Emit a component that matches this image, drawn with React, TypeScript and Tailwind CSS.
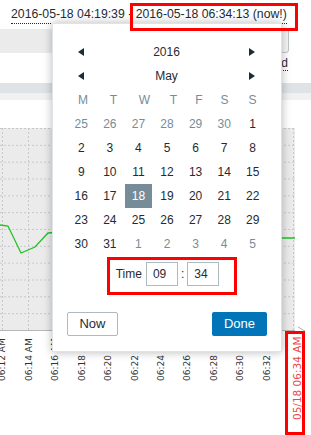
import React from "react";

type Day = { d: number; other?: boolean; sel?: boolean };

function buildDays(): Day[] {
  const out: Day[] = [];
  for (let d = 25; d <= 30; d++) out.push({ d, other: true });
  for (let d = 1; d <= 31; d++) out.push({ d, sel: d === 18 });
  for (let d = 1; d <= 5; d++) out.push({ d, other: true });
  return out;
}

function ArrowLeft() {
  return (
    <svg width="6" height="8" viewBox="0 0 6 8" className="block">
      <polygon points="6,0 6,8 0,4" fill="#1f2c33" />
    </svg>
  );
}
function ArrowRight() {
  return (
    <svg width="6" height="8" viewBox="0 0 6 8" className="block">
      <polygon points="0,0 0,8 6,4" fill="#1f2c33" />
    </svg>
  );
}

function Chart() {
  const H = 16.83;
  const labels = ["06:12", "06:14", "06:16", "06:18", "06:20", "06:22", "06:24", "06:26", "06:28", "06:30", "06:32"];
  return (
    <svg width="311" height="307" className="block">
      <rect x="-2" y="0" width="297" height="202" fill="#ebebeb" />
      {Array.from({ length: 12 }, (_, k) => (
        <line key={"h" + k} x1="0" x2="295" y1={k * H + 0.5} y2={k * H + 0.5} stroke="#c6c9cc" strokeDasharray="2 2" />
      ))}
      {Array.from({ length: 12 }, (_, j) => {
        const x = Math.round(2 + 26.45 * j) + 0.5;
        return <line key={"v" + j} x1={x} x2={x} y1="0" y2="202" stroke="#c6c9cc" strokeDasharray="2 2" />;
      })}
      <line x1="0" x2="295" y1="202.5" y2="202.5" stroke="#b4b8bb" />
      <polyline
        points="0,97 8,98 21,125 35,119 48,105 60,104 100,108 150,112 200,110 250,111 283,110 295,110"
        fill="none"
        stroke="#1fc41f"
        strokeWidth="1.3"
      />
      {labels.map((t, j) => {
        const bx = 2 + 26.45 * j + 3.3;
        return (
          <text
            key={t}
            transform={`translate(${bx},253) rotate(-90)`}
            fontSize="9"
            fontFamily="'DejaVu Sans', sans-serif"
            fill="#333"
          >
            {t} AM
          </text>
        );
      })}
      <polyline points="298,199 305,203" fill="none" stroke="#b0b0b0" />
      <text
        transform="translate(300.5,292) rotate(-90)"
        fontSize="10.5"
        fontFamily="'DejaVu Sans', sans-serif"
        fill="#e84848"
      >
        05/18 06:34 AM
      </text>
    </svg>
  );
}

export default function App() {
  const days = buildDays();
  const weekdays = ["M", "T", "W", "T", "F", "S", "S"];
  return (
    <div className="relative w-[311px] h-[435px] overflow-hidden bg-white font-['Liberation_Sans',Arial,sans-serif] text-[#1f2c33]">
      {/* header line */}
      <div className="h-[29px] pt-[7px] pl-[11px] whitespace-nowrap text-[12.25px] leading-[14px]">
        <span className="border-b border-dotted border-[#1f2c33] pb-[2px]">2016-05-18 04:19:39</span>
        <span> - </span>
        <span className="border-b border-dotted border-[#1f2c33] pb-[2px]">2016-05-18 06:34:13 (now!)</span>
      </div>
      {/* filter band */}
      <div className="h-[24px] flex">
        <div className="flex-1 bg-[#ebebeb]" />
        <div className="w-[40px] mr-[22px] -mt-[1px] bg-[#f6f6f6] border border-[#bfc4c7] rounded-[3px]" />
      </div>
      {/* link row */}
      <div className="h-[30px] flex justify-end pr-[23px] pt-[3px] text-[12px] leading-[14px]">
        <span className="h-[15px] border-b border-dotted border-[#1f2c33]">Fixed</span>
      </div>
      <div className="h-[10px] bg-[#dfe3e6]" />
      <div className="h-[7px] bg-[#eff1f2]" />
      <div className="h-[28px]" />
      <Chart />

      {/* calendar popup */}
      <div className="absolute left-[52px] top-[23px] w-[230px] h-[329px] bg-white border border-[#dde3e7] shadow-[0_0_9px_rgba(0,0,0,0.28)] flex flex-col text-[12px]">
        <div className="h-[16px]" />
        <div className="h-[24px] flex items-center pl-[25px] pr-[26px]">
          <ArrowLeft />
          <div className="flex-1 text-center leading-[14px]">2016</div>
          <ArrowRight />
        </div>
        <div className="h-[24px] flex items-center pl-[25px] pr-[26px]">
          <ArrowLeft />
          <div className="flex-1 text-center leading-[14px]">May</div>
          <ArrowRight />
        </div>
        <div className="ml-[15px] h-[24px] grid grid-cols-[30px_31px_31px_27px_24px_27px_29px] items-center text-[#768d99] leading-[24px]">
          {weekdays.map((w, i) => (
            <div key={i} className="text-center">
              {w}
            </div>
          ))}
        </div>
        <div className="ml-[14px] w-[200px] grid grid-cols-7">
          {days.map((day, i) => (
            <div key={i} className="h-[24px] flex justify-center">
              {day.sel ? (
                <div className="w-[27px] h-[24px] bg-[#768d99] text-white text-center leading-[24px]">{day.d}</div>
              ) : (
                <div className={"text-center leading-[24px] " + (day.other ? "text-[#768d99]" : "text-[#1f2c33]")}>
                  {day.d}
                </div>
              )}
            </div>
          ))}
        </div>
        <div className="mt-[6px] h-[24px] flex items-center justify-center gap-[3px] pl-[1px]">
          <span className="leading-[14px] mr-[1px]">Time</span>
          <input
            readOnly
            value="09"
            className="w-[32px] h-[24px] border border-[#acbbc2] px-[6px] text-[12px] text-[#1f2c33] outline-none"
          />
          <span className="leading-[14px]">:</span>
          <input
            readOnly
            value="34"
            className="w-[32px] h-[24px] border border-[#acbbc2] px-[6px] text-[12px] text-[#1f2c33] outline-none"
          />
        </div>
        <div className="mt-[26px] px-[14px] flex justify-between">
          <button className="w-[51px] h-[24px] border border-[#acbbc2] rounded-[2px] bg-white text-[13px] text-[#1f2c33] leading-[22px]">
            Now
          </button>
          <button className="w-[55px] h-[24px] rounded-[2px] bg-[#0275b8] text-[13px] text-white leading-[24px]">
            Done
          </button>
        </div>
      </div>

      {/* red annotation boxes */}
      <div className="absolute left-[130px] top-[3px] w-[168px] h-[28px] border-[3px] border-[#ff0000]" />
      <div className="absolute left-[107px] top-[257px] w-[130px] h-[38px] border-[3px] border-[#ff0000]" />
      <div className="absolute left-[285px] top-[331px] w-[20px] h-[104px] border-[3px] border-[#ff0000]" />
    </div>
  );
}
